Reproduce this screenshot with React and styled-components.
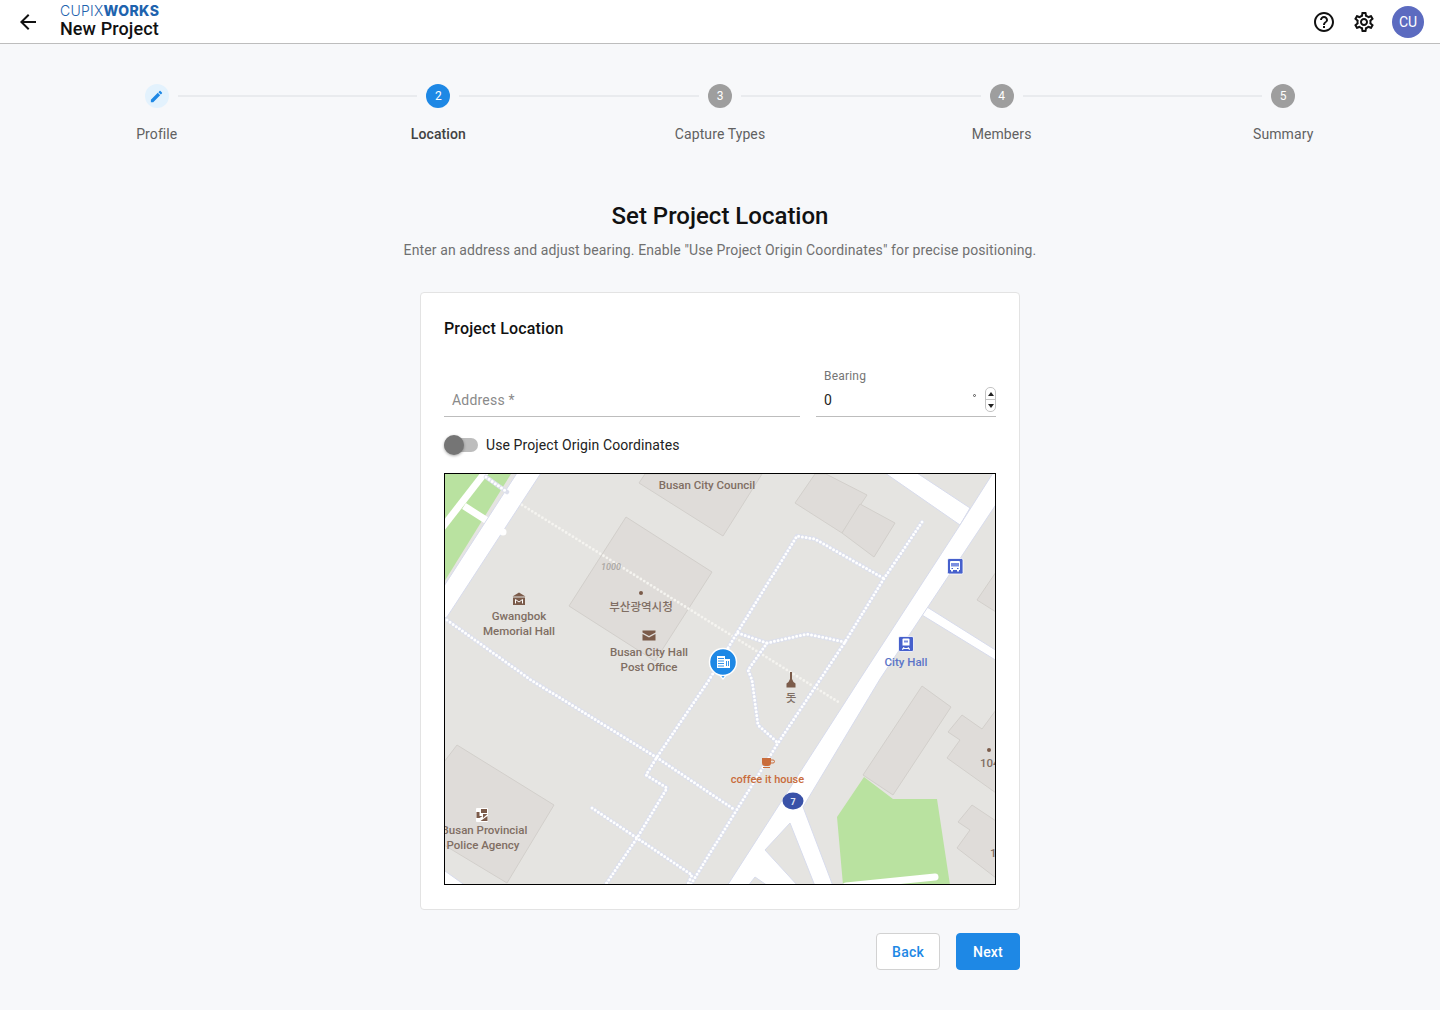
import React from "react";
import styled, { createGlobalStyle } from "styled-components";
import { MdArrowBack, MdHelpOutline, MdOutlineSettings, MdEdit } from "react-icons/md";

const GlobalStyle = createGlobalStyle`
  html, body {
    margin: 0;
    padding: 0;
    background: #f7f8fa;
    font-family: Roboto, "Liberation Sans", sans-serif;
  }
  * {
    box-sizing: border-box;
  }
`;

const Page = styled.div`
  width: 1440px;
  height: 1008px;
  background: #f7f8fa;
  display: flex;
  flex-direction: column;
`;

const Header = styled.header`
  height: 44px;
  background: #fff;
  border-bottom: 1px solid #bdbdbd;
  display: flex;
  align-items: center;
  padding: 0 16px;
`;
const BackIcon = styled.div`
  width: 24px;
  height: 24px;
  color: #111;
  display: flex;
  margin-right: 20px;
`;
const TitleBlock = styled.div`
  flex: 1;
  display: flex;
  flex-direction: column;
  margin-top: -1px;
`;
const Logo = styled.div`
  height: 15px;
  font-family: Inter, sans-serif;
  font-size: 14px;
  line-height: 15px;
  color: #1e63ae;
  font-weight: 300;
  letter-spacing: 0.25px;
`;
const LogoBold = styled.span`
  font-weight: 800;
  letter-spacing: 0.4px;
`;
const ProjectName = styled.div`
  font-size: 18px;
  line-height: 22px;
  font-weight: 500;
  color: #111;
  letter-spacing: 0.1px;
`;
const Actions = styled.div`
  display: flex;
  align-items: center;
  gap: 16px;
`;
const ActionIcon = styled.div`
  width: 24px;
  height: 24px;
  display: flex;
  color: #111;
`;
const Avatar = styled.div`
  width: 32px;
  height: 32px;
  border-radius: 50%;
  background: #5c6bc0;
  color: #fff;
  font-size: 14px;
  display: flex;
  align-items: center;
  justify-content: center;
`;

const Stepper = styled.div`
  display: grid;
  grid-template-columns: repeat(5, 1fr);
  padding: 0 16px;
  margin-top: 40px;
`;
const Step = styled.div`
  display: flex;
  flex-direction: column;
  align-items: center;
`;
const StepTrack = styled.div`
  width: 100%;
  display: flex;
  align-items: center;
  gap: 9px;
`;
const Connector = styled.div`
  flex: 1;
  height: 2px;
  background: ${(p) => (p.$hidden ? "transparent" : "#e9ebee")};
`;
const StepIcon = styled.div`
  width: 24px;
  height: 24px;
  border-radius: 50%;
  flex: none;
  display: flex;
  align-items: center;
  justify-content: center;
  font-size: 12px;
  color: ${(p) => (p.$done ? "#1e88e5" : "#fff")};
  background: ${(p) => (p.$done ? "#e3f2fd" : p.$active ? "#1e88e5" : "#9e9e9e")};
`;
const StepLabel = styled.div`
  margin-top: 16px;
  font-size: 14px;
  line-height: 20px;
  font-weight: ${(p) => (p.$active ? 500 : 400)};
  color: ${(p) => (p.$active ? "#424242" : "#616161")};
  letter-spacing: 0.1px;
`;

const Main = styled.main`
  display: flex;
  flex-direction: column;
  align-items: center;
  margin-top: 56px;
`;
const Heading = styled.h1`
  margin: 0;
  font-size: 24px;
  line-height: 32px;
  font-weight: 500;
  color: #111;
`;
const Subheading = styled.p`
  margin: 8px 0 0;
  font-size: 14px;
  line-height: 20px;
  color: #707070;
  letter-spacing: 0.11px;
`;
const Card = styled.section`
  width: 600px;
  height: 618px;
  margin-top: 32px;
  background: #fff;
  border: 1px solid #e3e3e3;
  border-radius: 4px;
  padding: 24px 23px 0;
`;
const CardTitle = styled.h2`
  margin: 0;
  font-size: 16px;
  line-height: 24px;
  font-weight: 500;
  color: #111;
  letter-spacing: 0.15px;
`;
const FieldRow = styled.div`
  display: flex;
  gap: 16px;
  margin-top: 27px;
`;
const Field = styled.div`
  width: ${(p) => p.$width}px;
  height: 49px;
  border-bottom: 1px solid #bdbdbd;
  display: flex;
  flex-direction: column;
  justify-content: flex-end;
`;
const FieldLabel = styled.div`
  font-size: 12px;
  line-height: 16px;
  color: #757575;
  padding-left: 8px;
  letter-spacing: 0.2px;
`;
const FieldValue = styled.div`
  display: flex;
  align-items: center;
  height: 32px;
  flex: none;
  padding-left: 8px;
  font-size: 14px;
  letter-spacing: 0.2px;
  color: ${(p) => (p.$placeholder ? "#8a8a8a" : "#222")};
`;
const Grow = styled.span`
  flex: 1;
`;
const Degree = styled.span`
  width: 3px;
  height: 3px;
  border: 1px solid #555;
  border-radius: 50%;
  margin: -9px 9px 0 0;
`;
const Spinner = styled.div`
  width: 11px;
  height: 25px;
  border: 1px solid #c4c4c4;
  border-radius: 5px;
  display: flex;
  flex-direction: column;
  margin-top: -1px;
`;
const SpinPart = styled.div`
  flex: 1;
  display: flex;
  align-items: center;
  justify-content: center;
  border-top: ${(p) => (p.$up ? "none" : "1px solid #c4c4c4")};
`;
const SpinArrow = styled.div`
  width: 0;
  height: 0;
  border-left: 3.5px solid transparent;
  border-right: 3.5px solid transparent;
  border-${(p) => (p.$up ? "bottom" : "top")}: 4px solid #222;
`;
const SwitchRow = styled.div`
  display: flex;
  align-items: center;
  height: 24px;
  margin-top: 16px;
`;
const SwitchTrack = styled.div`
  width: 34px;
  height: 14px;
  background: #bdbdbd;
  border-radius: 7px;
  display: flex;
  align-items: center;
  margin-right: 8px;
`;
const SwitchThumb = styled.div`
  width: 20px;
  height: 20px;
  border-radius: 50%;
  background: #757575;
  box-shadow: 0 1px 3px rgba(0, 0, 0, 0.35);
`;
const SwitchLabel = styled.span`
  font-size: 14px;
  color: #222;
  letter-spacing: 0.1px;
`;
const MapFrame = styled.div`
  width: 552px;
  height: 412px;
  margin-top: 16px;
  border: 1px solid #000;
  background: #e5e4e1;
`;
const MapSvg = styled.svg`
  display: block;
  width: 550px;
  height: 410px;
`;
const tones = { poi: "#7f6e63", transit: "#5b74c8", food: "#c96c3c", faint: "#a9a6a2" };
const MapLabel = styled.text`
  font-family: Roboto, "Noto Sans CJK KR", sans-serif;
  font-size: ${(p) => p.$size || 11.5}px;
  font-weight: 500;
  font-style: ${(p) => (p.$italic ? "italic" : "normal")};
  text-anchor: ${(p) => p.$anchor || "middle"};
  fill: ${(p) => tones[p.$tone || "poi"]};
`;
const Buttons = styled.div`
  width: 600px;
  display: flex;
  justify-content: flex-end;
  gap: 16px;
  margin-top: 23px;
`;
const Button = styled.button`
  width: 64px;
  height: 37px;
  border-radius: 4px;
  font-family: Roboto, sans-serif;
  font-size: 14px;
  font-weight: 500;
  letter-spacing: 0.2px;
  border: 1px solid ${(p) => (p.$primary ? "#1e88e5" : "#d2d2d2")};
  background: ${(p) => (p.$primary ? "#1e88e5" : "#fff")};
  color: ${(p) => (p.$primary ? "#fff" : "#1e88e5")};
`;

const steps = ["Profile", "Location", "Capture Types", "Members", "Summary"];

const buildings = [
  "626,517 712,572 655,661 569,606",
  "645,474 639,483 723,536 762,474",
  "795,503 815,474 826,474 867,495 842,533",
  "860,504 895,523 874,557 842,533",
  "922,686 951,707 893,795 863,775",
  "962,715 982,729 996,710 996,793 947,758 960,740 948,732",
  "972,805 996,821 996,878 957,848 970,830 958,822",
  "977,600 996,572 996,612",
  "444,762 457,745 554,805 507,883 444,845",
];

const footpaths = [
  "486,477 507,492",
  "447,620 531,680 656,757 735,810",
  "922,522 883,580 845,642 778,743 720,837 691,884",
  "883,578 815,539 797,536 737,633 709,680 657,757 646,775 667,788 637,838 606,884",
  "738,633 767,643 748,670 752,680 758,725 778,743",
  "767,643 807,634 845,642",
  "592,808 637,838 692,875 688,884",
];

function CityMap() {
  return (
    <MapSvg viewBox="445 474 550 410">
      <polygon points="444,474 511,474 444,582" fill="#b9e2a0" />
      <line x1="487" y1="470" x2="442" y2="528" stroke="#fff" strokeWidth="7" />
      <line x1="464" y1="506" x2="489" y2="522" stroke="#fff" strokeWidth="7" />

      {buildings.map((points) => (
        <polygon key={points} points={points} fill="#dfdcd9" stroke="#d2cfcb" strokeWidth="1" />
      ))}

      <polygon points="843,885 837,817 864,777 893,799 937,799 950,885" fill="#b9e2a0" />
      <line x1="846" y1="886" x2="935" y2="877" stroke="#fff" strokeWidth="7" strokeLinecap="round" />

      <g fill="#fff" stroke="#d7dbec" strokeWidth="1">
        <polygon points="517,473 541,473 447,617 444,618 444,586" />
        <polygon points="885,473 917,473 970,508 960,525" />
        <polygon points="927,607 997,651 997,661 922,615" />
        <polygon points="993,473 997,473 997,503 880,679 803,807 833,886 815,886 790,823 765,850 798,886 768,886 755,877 748,886 727,886 860,679 960,525" />
        <polygon points="444,872 445,871 466,886 444,886" />
      </g>
      <circle cx="503" cy="532" r="3.500" fill="#fff" />

      <g fill="none" strokeLinejoin="round" strokeLinecap="round">
        <polyline points="522,505 840,703" stroke="#f5f4f0" strokeWidth="2.800" strokeDasharray="0 4" />
        {footpaths.map((points) => (
          <polyline key={points} points={points} stroke="#dde0ec" strokeWidth="4.500" />
        ))}
        {footpaths.map((points) => (
          <polyline key={points} points={points} stroke="#fff" strokeWidth="3" strokeDasharray="0 3.800" />
        ))}
      </g>

      <MapLabel x="707" y="489">Busan City Council</MapLabel>
      <MapLabel x="611" y="570" $size={9} $italic $tone="faint">1000</MapLabel>
      <circle cx="641" cy="593" r="2" fill="#7b5b4a" />
      <MapLabel x="641" y="611">부산광역시청</MapLabel>

      {/* museum */}
      <path d="M512.500 596.500l6.500-4 6.500 4zM513 597.500h12v7.500h-12z" fill="#7b5b4a" />
      <path d="M515.500 603.500v-4l3.500 2.500 3.500-2.500v4" fill="none" stroke="#fff" strokeWidth="1" />
      <MapLabel x="519" y="620">Gwangbok</MapLabel>
      <MapLabel x="519" y="635">Memorial Hall</MapLabel>

      {/* post office */}
      <path d="M642.500 630.500h13v2l-6.500 3.500-6.500-3.500zM642.500 634l6.500 3.500 6.500-3.500v6.500h-13z" fill="#7b5b4a" />
      <MapLabel x="649" y="656">Busan City Hall</MapLabel>
      <MapLabel x="649" y="671">Post Office</MapLabel>

      {/* pinned location */}
      <path d="M718 673h10l-5 6z" fill="#1e88e5" stroke="#fff" strokeWidth="1.200" />
      <circle cx="723" cy="662" r="13.500" fill="#1e88e5" stroke="#fff" strokeWidth="1.500" />
      <path d="M717 656h8v12h-8zM725 659h5v9h-5z" fill="#fff" />
      <path d="M718 658.500h6M718 661h6M718 663.500h6M718 666h6" stroke="#1e88e5" strokeWidth="0.900" />
      <path d="M726.500 661v5M728.500 661v5" stroke="#1e88e5" strokeWidth="0.900" />

      {/* brush monument */}
      <path d="M790 672h2v7l1.500 3 2 1.500v4h-9v-4l2-1.500 1.500-3z" fill="#7b5b4a" />
      <MapLabel x="791" y="702">돗</MapLabel>

      {/* bus stop */}
      <rect x="947.500" y="558.500" width="15.500" height="15.500" rx="1.500" fill="#4660cc" stroke="#fff" strokeWidth="0.800" />
      <path d="M951 561h8a1 1 0 0 1 1 1v8h-1v1.500h-2v-1.500h-4v1.500h-2v-1.500h-1v-8a1 1 0 0 1 1-1z" fill="#fff" />
      <rect x="951" y="563" width="8" height="3.500" fill="#7c8fe0" />
      <path d="M951.500 568.500h1.500M957 568.500h1.500" stroke="#4660cc" strokeWidth="1" />

      {/* metro */}
      <rect x="898.500" y="636.500" width="15" height="15" rx="1.500" fill="#4660cc" stroke="#fff" strokeWidth="0.800" />
      <path d="M903.500 638.500h5a1 1 0 0 1 1 1v6h-7v-6a1 1 0 0 1 1-1z" fill="#fff" />
      <rect x="904" y="640.500" width="4" height="2" fill="#7c8fe0" />
      <path d="M902.500 650l1.500-3M909.500 650l-1.500-3M902.500 648.500h7" stroke="#fff" strokeWidth="1" />
      <MapLabel x="906" y="666" $tone="transit">City Hall</MapLabel>

      {/* cafe */}
      <path d="M762 758h9v5a3 3 0 0 1-3 3h-3a3 3 0 0 1-3-3z" fill="#c96c3c" />
      <path d="M771 760h2a1.500 1.500 0 0 1 0 3h-2" fill="none" stroke="#c96c3c" strokeWidth="1" />
      <path d="M763 767.500h7" stroke="#c96c3c" strokeWidth="1" />
      <MapLabel x="767.500" y="783" $tone="food" $size={11}>coffee it house</MapLabel>

      {/* route shield */}
      <ellipse cx="793" cy="801" rx="10.500" ry="8.500" fill="#3a52a8" />
      <MapLabel x="793" y="804.500" $size={9}>
        <tspan fill="#dfe4f5" fontWeight="700">7</tspan>
      </MapLabel>

      {/* police */}
      <rect x="476" y="808" width="12" height="14" rx="1" fill="#fff" />
      <path d="M481 809h6v4h-6zM476.500 812h3v4h3l-3 2h-3zM483 814h4.500l-4.500 4zM487.500 816v5h-7z" fill="#7b5b4a" />
      <MapLabel x="484.500" y="834">Busan Provincial</MapLabel>
      <MapLabel x="483" y="849">Police Agency</MapLabel>

      <circle cx="989" cy="750" r="2" fill="#7b5b4a" />
      <MapLabel x="980" y="767" $anchor="start">104</MapLabel>
      <MapLabel x="990" y="857" $anchor="start">1</MapLabel>
    </MapSvg>
  );
}

export default function App() {
  return (
    <Page>
      <GlobalStyle />
      <Header>
        <BackIcon>
          <MdArrowBack size={24} />
        </BackIcon>
        <TitleBlock>
          <Logo>
            CUPIX<LogoBold>WORKS</LogoBold>
          </Logo>
          <ProjectName>New Project</ProjectName>
        </TitleBlock>
        <Actions>
          <ActionIcon>
            <MdHelpOutline size={24} />
          </ActionIcon>
          <ActionIcon>
            <MdOutlineSettings size={24} />
          </ActionIcon>
          <Avatar>CU</Avatar>
        </Actions>
      </Header>

      <Stepper>
        {steps.map((label, i) => (
          <Step key={label}>
            <StepTrack>
              <Connector $hidden={i === 0} />
              <StepIcon $done={i === 0} $active={i === 1}>
                {i === 0 ? <MdEdit size={15} /> : i + 1}
              </StepIcon>
              <Connector $hidden={i === steps.length - 1} />
            </StepTrack>
            <StepLabel $active={i === 1}>{label}</StepLabel>
          </Step>
        ))}
      </Stepper>

      <Main>
        <Heading>Set Project Location</Heading>
        <Subheading>
          Enter an address and adjust bearing. Enable "Use Project Origin Coordinates" for precise positioning.
        </Subheading>
        <Card>
          <CardTitle>Project Location</CardTitle>
          <FieldRow>
            <Field $width={356}>
              <FieldValue $placeholder>Address *</FieldValue>
            </Field>
            <Field $width={180}>
              <FieldLabel>Bearing</FieldLabel>
              <FieldValue>
                0
                <Grow />
                <Degree />
                <Spinner>
                  <SpinPart $up>
                    <SpinArrow $up />
                  </SpinPart>
                  <SpinPart>
                    <SpinArrow />
                  </SpinPart>
                </Spinner>
              </FieldValue>
            </Field>
          </FieldRow>
          <SwitchRow>
            <SwitchTrack>
              <SwitchThumb />
            </SwitchTrack>
            <SwitchLabel>Use Project Origin Coordinates</SwitchLabel>
          </SwitchRow>
          <MapFrame>
            <CityMap />
          </MapFrame>
        </Card>
        <Buttons>
          <Button>Back</Button>
          <Button $primary>Next</Button>
        </Buttons>
      </Main>
    </Page>
  );
}
